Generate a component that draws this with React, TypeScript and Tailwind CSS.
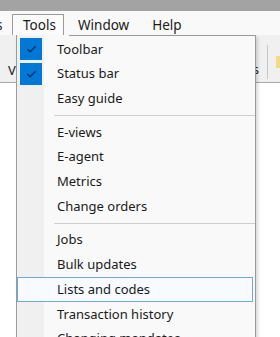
import { Check } from 'lucide-react';

type Entry = { label: string; checked?: boolean; hot?: boolean } | 'sep';

const entries: Entry[] = [
  { label: 'Toolbar', checked: true },
  { label: 'Status bar', checked: true },
  { label: 'Easy guide' },
  'sep',
  { label: 'E-views' },
  { label: 'E-agent' },
  { label: 'Metrics' },
  { label: 'Change orders' },
  'sep',
  { label: 'Jobs' },
  { label: 'Bulk updates' },
  { label: 'Lists and codes', hot: true },
  { label: 'Transaction history' },
  { label: 'Changing mandates' },
];

const App = () => {
  return (
    <div
      className="relative w-[280px] h-[337px] overflow-hidden bg-white text-[#1a1a1a]"
      style={{ fontFamily: '"Noto Sans", "Open Sans", sans-serif' }}
    >
      <div className="h-[11px] bg-[#a3a3a3]" />
      {/* menu bar */}
      <div className="flex h-[24px] items-end bg-[#f9f9f9] text-[13.5px]">
        <span className="w-[16px] -ml-[4px] pb-0 leading-[20px]">s</span>
        <div className="flex h-[21px] w-[52px] items-end justify-center border-l border-t border-r border-[#9a9a9a] bg-[#fbfbfb] pl-[3px] leading-[20px]">
          Tools
        </div>
        <span className="ml-[14px] leading-[20px]">Window</span>
        <span className="ml-[23px] leading-[20px]">Help</span>
      </div>
      {/* toolbar strip */}
      <div className="relative flex h-[48px] items-center justify-between border-b border-[#a8a8a8] bg-[#f0f0f0] text-[13px]">
        <span className="pl-[8px] pt-[24px]">V</span>
        <div className="flex items-center gap-[8px] pt-[6px]">
          <span className="pt-[16px]">s</span>
          <div className="h-[34px] w-px bg-[#c8c8c8]" />
          <div className="h-[12px] w-[4px] bg-[#f3d98a]" />
        </div>
      </div>

      {/* dropdown */}
      <div className="absolute left-[16px] top-[35px] w-[240px] border-l border-r border-[#9a9a9a] bg-[#f9f9f9] shadow-[2px_2px_3px_rgba(0,0,0,0.15)]">
        <div className="ml-[52px] h-px bg-[#9a9a9a]" />
        <div className="relative py-[1px] text-[13px]">
          <div className="absolute left-0 top-0 bottom-0 w-[27px] bg-[#f0f0f0]" />
          {entries.map((e, i) =>
            e === 'sep' ? (
              <div key={i} className="relative flex h-[8.5px] items-center">
                <div className="ml-[37px] h-px flex-1 bg-[#cfcfcf]" />
              </div>
            ) : (
              <div
                key={i}
                className={`relative flex h-[24.8px] items-center ${
                  e.hot ? 'mr-[2px] border border-[#6ea8de] bg-[#f7fbff]' : 'border border-transparent'
                }`}
              >
                <div className="flex w-[39px] shrink-0 items-center pl-[2px]">
                  {e.checked && (
                    <div className="flex h-[22px] w-[22px] items-center justify-center bg-[#0078d7]">
                      <Check size={11} strokeWidth={3} className="text-[#0b2e59]" />
                    </div>
                  )}
                </div>
                <span className="whitespace-nowrap">{e.label}</span>
              </div>
            )
          )}
        </div>
      </div>
    </div>
  );
};

export default App;
